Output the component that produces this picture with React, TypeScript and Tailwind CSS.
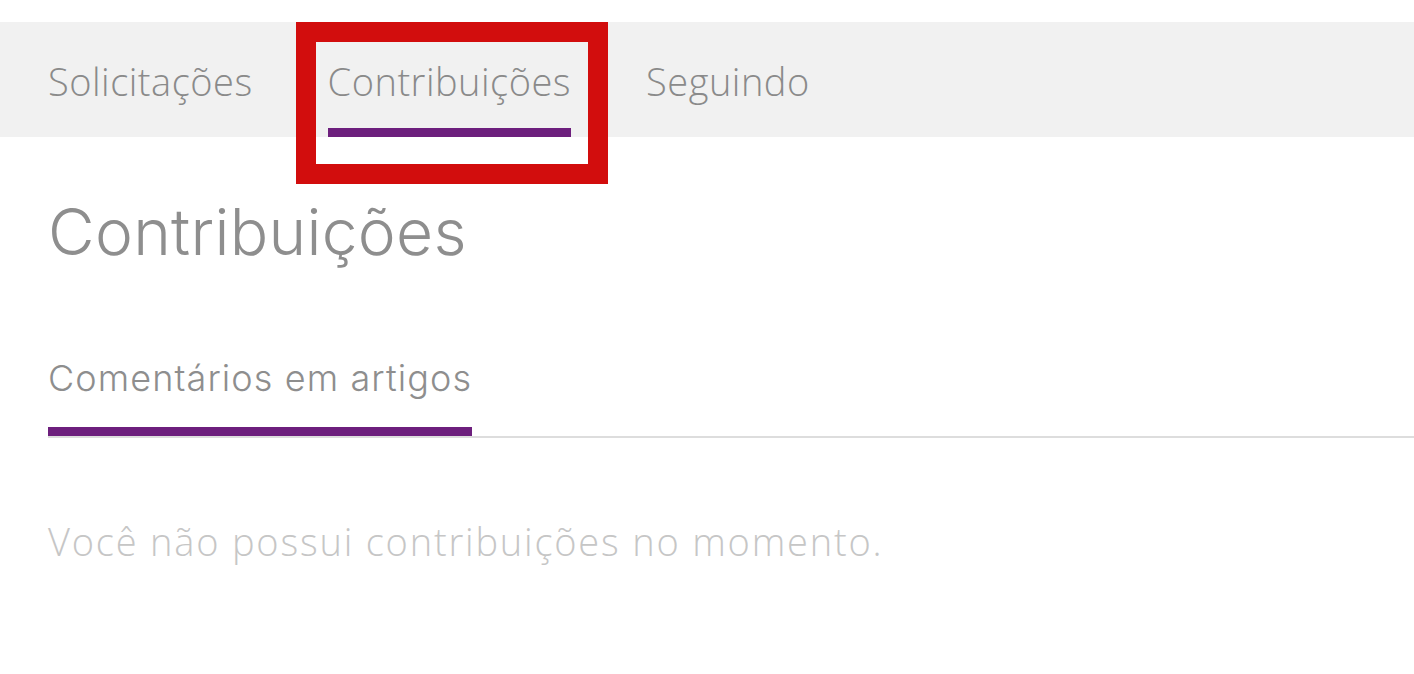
const tabs = [
  { label: 'Solicitações', active: false },
  { label: 'Contribuições', active: true },
  { label: 'Seguindo', active: false },
];

export default function App() {
  return (
    <div className="relative min-h-[674px] bg-white font-['Open_Sans',sans-serif]">
      <div className="h-[22px]" />
      <nav className="flex h-[115px] gap-[75px] bg-[#f1f1f1] pl-[48px]">
        {tabs.map(tab => (
          <div key={tab.label} className="flex flex-col">
            <span className="pt-[37px] text-[38px] font-light leading-[44px] tracking-[0.5px] text-[#8a8a8a]">{tab.label}</span>
            {tab.active && <span className="mt-auto h-[9px] bg-[#6d1f7d]" />}
          </div>
        ))}
      </nav>

      {/* annotation frame round the active tab */}
      <div className="pointer-events-none absolute left-[296px] top-[22px] h-[162px] w-[312px] border-[20px] border-[#d20d0d]" />

      <main className="pl-[48px]">
        <h1 className="mt-[57px] font-['Inter',sans-serif] text-[64px] font-light leading-[76px] tracking-[0.3px] text-[#8e8e8e]">
          Contribuições
        </h1>

        <div className="mt-[86px] flex border-b-2 border-[#dddddd]">
          <div className="flex flex-col">
            <span className="font-['Inter',sans-serif] text-[36px] font-light leading-[44px] tracking-[1.1px] text-[#8e8e8e]">
              Comentários em artigos
            </span>
            <span className="mt-[27px] h-[9px] bg-[#6d1f7d]" />
          </div>
        </div>

        <p className="mt-[81px] text-[38px] font-light leading-[44px] tracking-[1.8px] text-[#c6c6c6]">
          Você não possui contribuições no momento.
        </p>
      </main>
    </div>
  );
}
